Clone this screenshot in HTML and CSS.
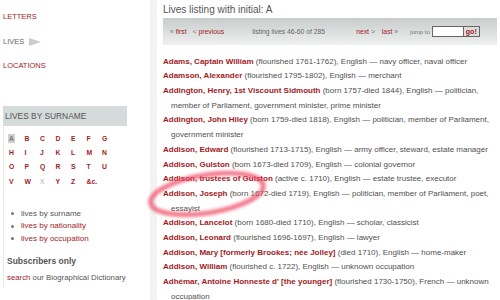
FILE: index.html
```html
<!DOCTYPE html>
<html lang="en">
<head>
<meta charset="utf-8">
<title>Lives listing</title>
<link rel="stylesheet" href="styles.css">
</head>
<body>
<div class="page">
  <aside class="side">
    <nav class="sections">
      <a class="sec" href="#">LETTERS</a>
      <span class="sec cur">LIVES <span class="arrow"></span></span>
      <a class="sec" href="#">LOCATIONS</a>
    </nav>
    <div class="box">
      <div class="box-head">LIVES BY SURNAME</div>
      <div class="letters">
        <span class="sel">A</span><a href="#">B</a><a href="#">C</a><a href="#">D</a><a href="#">E</a><a href="#">F</a><a href="#">G</a>
        <a href="#">H</a><a href="#">I</a><a href="#">J</a><a href="#">K</a><a href="#">L</a><a href="#">M</a><a href="#">N</a>
        <a href="#">O</a><a href="#">P</a><a href="#">Q</a><a href="#">R</a><a href="#">S</a><a href="#">T</a><a href="#">U</a>
        <a href="#">V</a><a href="#">W</a><span class="off">X</span><a href="#">Y</a><a href="#">Z</a><a href="#">&amp;c.</a>
      </div>
      <ul class="by">
        <li>lives by surname</li>
        <li><a href="#">lives by nationality</a></li>
        <li><a href="#">lives by occupation</a></li>
      </ul>
      <div class="sub-title">Subscribers only</div>
      <div class="sub"><a href="#">search</a> our Biographical Dictionary</div>
    </div>
  </aside>
  <main class="main">
    <h1 class="title">Lives listing with initial: A</h1>
    <div class="pager">
      <span class="p-first"><span class="g">«</span> <a href="#">first</a></span>
      <span class="p-prev"><span class="g">&lt;</span> <a href="#">previous</a></span>
      <span class="p-info">listing lives 46-60 of 285</span>
      <span class="p-next"><a href="#">next</a> <span class="g">&gt;</span></span>
      <span class="p-last"><a href="#">last</a> <span class="g">»</span></span>
      <span class="p-jump">jump to</span>
      <span class="p-input"></span>
      <span class="p-go">go!</span>
    </div>
    <ul class="lives">
      <li><a href="#">Adams, Captain William</a> (flourished 1761-1762), English — navy officer, naval officer</li>
      <li><a href="#">Adamson, Alexander</a> (flourished 1795-1802), English — merchant</li>
      <li><a href="#">Addington, Henry, 1st Viscount Sidmouth</a> (born 1757-died 1844), English — politician, member of Parliament, government minister, prime minister</li>
      <li><a href="#">Addington, John Hiley</a> (born 1759-died 1818), English — politician, member of Parliament, government minister</li>
      <li><a href="#">Addison, Edward</a> (flourished 1713-1715), English — army officer, steward, estate manager</li>
      <li><a href="#">Addison, Gulston</a> (born 1673-died 1709), English — colonial governor</li>
      <li><a href="#">Addison, trustees of Gulston</a> (active c. 1710), English — estate trustee, executor</li>
      <li><a href="#">Addison, Joseph</a> (born 1672-died 1719), English — politician, member of Parliament, poet, essayist</li>
      <li><a href="#">Addison, Lancelot</a> (born 1680-died 1710), English — scholar, classicist</li>
      <li><a href="#">Addison, Leonard</a> (flourished 1696-1697), English — lawyer</li>
      <li><a href="#">Addison, Mary [formerly Brookes; née Jolley]</a> (died 1710), English — home-maker</li>
      <li><a href="#">Addison, William</a> (flourished c. 1722), English — unknown occupation</li>
      <li><a href="#">Adhémar, Antoine Honneste d' [the younger]</a> (flourished 1730-1750), French — unknown occupation</li>
    </ul>
    <svg class="ring" width="130" height="70" viewBox="0 0 130 70">
      <defs>
        <filter id="soft" x="-20%" y="-40%" width="140%" height="180%">
          <feGaussianBlur stdDeviation="1.4"/>
        </filter>
      </defs>
      <ellipse cx="62" cy="34" rx="57" ry="19" transform="rotate(-9 62 34)" fill="none" stroke="rgba(238,72,98,0.72)" stroke-width="5" filter="url(#soft)"/>
    </svg>
  </main>
</div>
</body>
</html>
```
FILE: styles.css
```css
* { box-sizing: border-box; margin: 0; padding: 0; }
html, body { width: 500px; height: 300px; overflow: hidden; background: #fff; }
body { font-family: "Liberation Sans", Arial, sans-serif; font-size: 8px; color: #555; }
a { color: #a11b1f; text-decoration: none; }

.page { display: flex; height: 300px; }

/* sidebar */
.side { width: 157px; flex: none; border-right: 7px solid #f3f3f3; }
.sections { display: flex; flex-direction: column; gap: 14.5px; padding: 12px 0 0 3px; font-size: 7.5px; line-height: 10px; }
.sec.cur { color: #666; display: flex; align-items: center; gap: 5px; }
.arrow { width: 0; height: 0; border-left: 12px solid #ccc; border-top: 4px solid transparent; border-bottom: 4px solid transparent; }

.box { margin: 35px 0 0 3px; width: 124px; height: 182px; border-left: 1px solid #e8e8e8; }
.box-head { margin-left: -1px; height: 20px; line-height: 20px; padding-left: 2px; background: #d5dada; color: #555; font-size: 8.4px; }

.letters { display: grid; grid-template-columns: repeat(7, 15.5px); grid-auto-rows: 14.3px; padding: 5px 0 0 4px; font-size: 6.8px; font-weight: bold; }
.letters a, .letters span { align-self: center; justify-self: start; padding: 0 1px; line-height: 9px; }
.letters .sel { background: #d0d0d0; color: #777; }
.letters .off { color: #c8c8c8; }

.by { list-style: none; margin-top: 19.5px; }
.by li { display: flex; align-items: center; line-height: 12.5px; padding-left: 7px; }
.by li::before { content: ""; width: 3px; height: 3px; border-radius: 50%; background: #777; margin-right: 7px; }

.sub-title { margin-top: 11px; padding-left: 3px; font-size: 8.5px; font-weight: bold; line-height: 11px; color: #555; }
.sub { margin-top: 5px; padding-left: 3px; line-height: 11px; white-space: nowrap; font-size: 7.8px; }

/* main */
.main { flex: 1; position: relative; padding: 4px 3px 0 6px; }
.title { font-size: 10px; font-weight: normal; line-height: 12px; color: #555; }

.pager { margin-top: 2px; height: 27px; display: flex; align-items: center; padding-left: 7px; font-size: 6.8px; color: #666; background: linear-gradient(#c9cccc, #eff0f0); }
.pager .g { color: #777; }
.p-prev { margin-left: 6px; }
.p-info { margin-left: 28px; }
.p-next { margin-left: 31px; }
.p-last { margin-left: 7px; }
.p-jump { margin-left: 12px; font-size: 6px; color: #777; }
.p-input { margin-left: 2px; width: 32px; height: 11px; background: #fff; border: 1px solid #666; }
.p-go { height: 11px; width: 16px; line-height: 9px; border: 1px solid #666; border-left: none; background: #ddd; color: #a11b1f; font-weight: bold; font-size: 7px; text-align: center; }

.lives { list-style: none; margin-top: 9.6px; color: #505050; }
.lives li { line-height: 14.7px; padding-left: 8px; text-indent: -8px; }
.lives a { font-weight: bold; color: #a01a1e; }

.ring { position: absolute; left: -12px; top: 160px; overflow: visible; pointer-events: none; }
```
